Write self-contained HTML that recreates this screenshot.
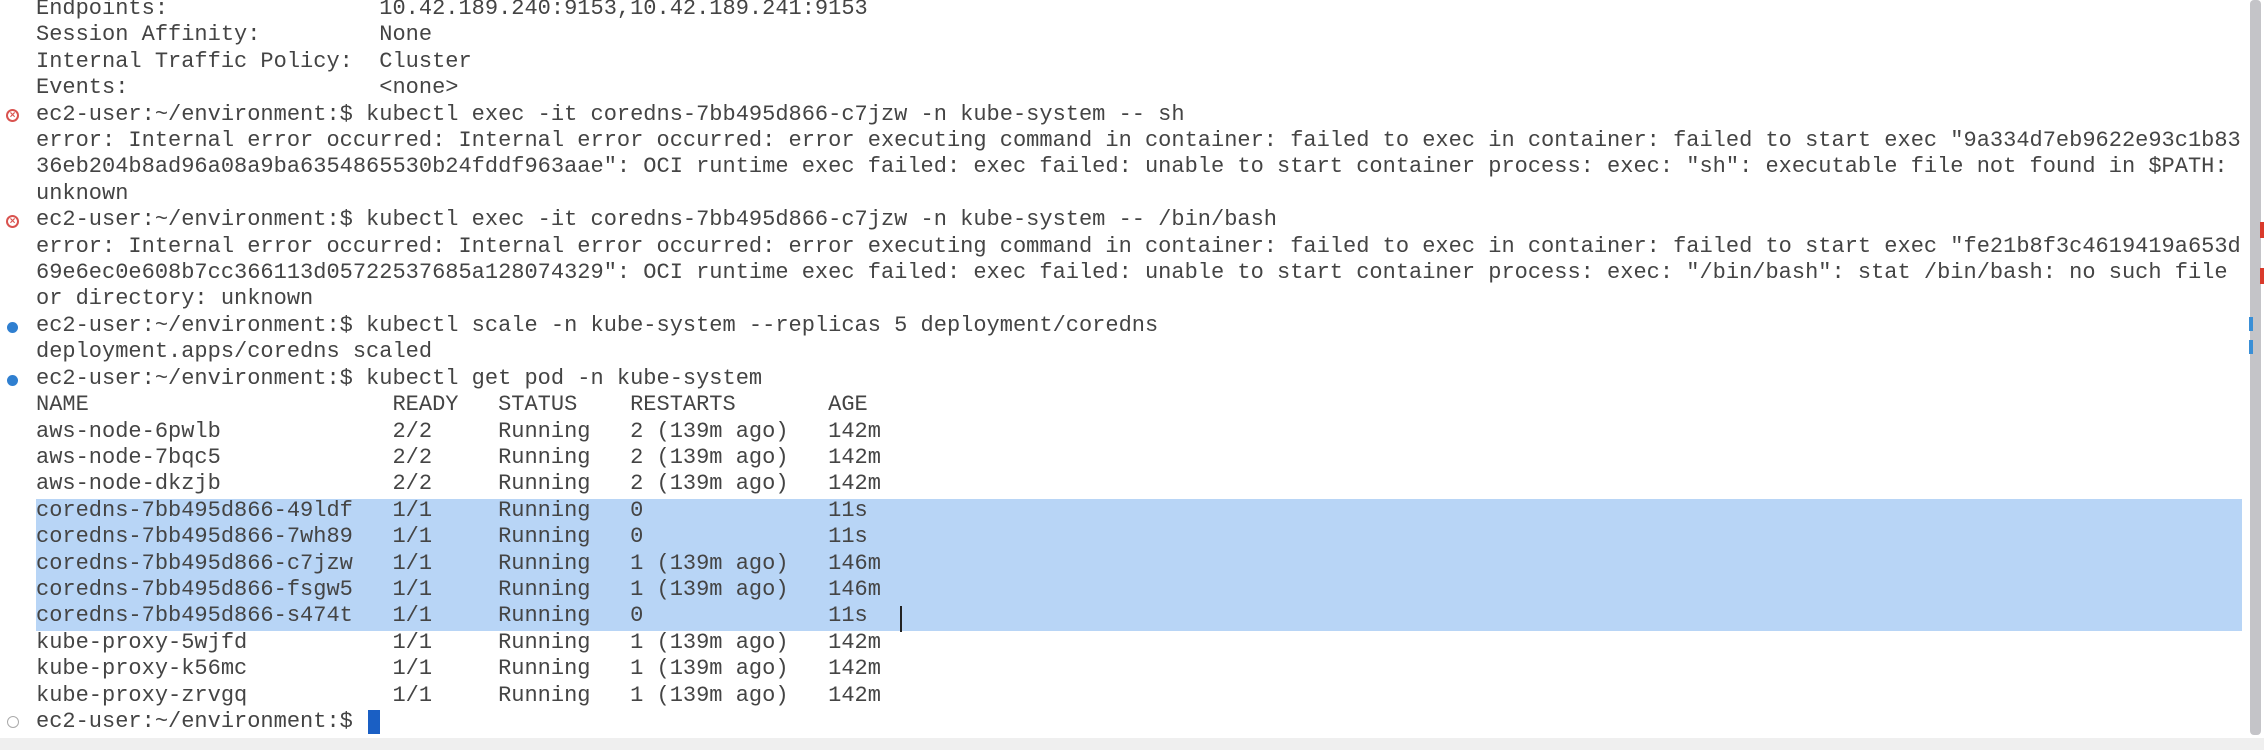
<!DOCTYPE html>
<html><head><style>
html,body{margin:0;padding:0;width:2264px;height:750px;overflow:hidden;background:#fff;}
.t{position:absolute;left:36px;top:-4px;font-family:"Liberation Mono","DejaVu Sans Mono",monospace;font-size:22px;line-height:26.4px;color:#444;white-space:pre;}
.sel{position:absolute;left:36px;top:499px;width:2206px;height:132px;background:#b8d5f6;}
.ic{position:absolute;left:6px;width:13px;height:13px;border-radius:50%;}
.sb{position:absolute;left:2250px;top:0;width:11px;height:735px;background:#c4c4c8;border-radius:4px;}
.bot{position:absolute;left:0;top:738px;width:2264px;height:12px;background:#efefef;}
</style></head><body>
<div class="sel"></div>
<div class="sb"></div>
<div style="position:absolute;left:2260px;top:222px;width:4px;height:16px;background:#d93a2b"></div>
<div style="position:absolute;left:2260px;top:268px;width:4px;height:16px;background:#d93a2b"></div>
<div style="position:absolute;left:2249px;top:317px;width:4px;height:14px;background:#3a8fd6"></div>
<div style="position:absolute;left:2249px;top:340px;width:4px;height:14px;background:#3a8fd6"></div>
<div class="bot"></div>
<div class="ic" style="top:109px;border:2px solid #d9534f;width:9px;height:9px;color:#d9534f;font:bold 10px/9px sans-serif;text-align:center">×</div>
<div class="ic" style="top:215px;border:2px solid #d9534f;width:9px;height:9px;color:#d9534f;font:bold 10px/9px sans-serif;text-align:center">×</div>
<div class="ic" style="top:322px;background:#2f7fd0;width:11px;height:11px;left:7px"></div>
<div class="ic" style="top:375px;background:#2f7fd0;width:11px;height:11px;left:7px"></div>
<div class="ic" style="top:716px;border:1px solid #aaa;width:10px;height:10px;left:7px"></div>
<div style="position:absolute;left:368px;top:710px;width:12px;height:24px;background:#1a5fc4"></div>
<div style="position:absolute;left:900px;top:606px;width:2px;height:26px;background:#222"></div>
<div class="t">Endpoints:                10.42.189.240:9153,10.42.189.241:9153
Session Affinity:         None
Internal Traffic Policy:  Cluster
Events:                   &lt;none&gt;
ec2-user:~/environment:$ kubectl exec -it coredns-7bb495d866-c7jzw -n kube-system -- sh
error: Internal error occurred: Internal error occurred: error executing command in container: failed to exec in container: failed to start exec "9a334d7eb9622e93c1b83
36eb204b8ad96a08a9ba6354865530b24fddf963aae": OCI runtime exec failed: exec failed: unable to start container process: exec: "sh": executable file not found in $PATH:
unknown
ec2-user:~/environment:$ kubectl exec -it coredns-7bb495d866-c7jzw -n kube-system -- /bin/bash
error: Internal error occurred: Internal error occurred: error executing command in container: failed to exec in container: failed to start exec "fe21b8f3c4619419a653d
69e6ec0e608b7cc366113d05722537685a128074329": OCI runtime exec failed: exec failed: unable to start container process: exec: "/bin/bash": stat /bin/bash: no such file
or directory: unknown
ec2-user:~/environment:$ kubectl scale -n kube-system --replicas 5 deployment/coredns
deployment.apps/coredns scaled
ec2-user:~/environment:$ kubectl get pod -n kube-system
NAME                       READY   STATUS    RESTARTS       AGE
aws-node-6pwlb             2/2     Running   2 (139m ago)   142m
aws-node-7bqc5             2/2     Running   2 (139m ago)   142m
aws-node-dkzjb             2/2     Running   2 (139m ago)   142m
coredns-7bb495d866-49ldf   1/1     Running   0              11s
coredns-7bb495d866-7wh89   1/1     Running   0              11s
coredns-7bb495d866-c7jzw   1/1     Running   1 (139m ago)   146m
coredns-7bb495d866-fsgw5   1/1     Running   1 (139m ago)   146m
coredns-7bb495d866-s474t   1/1     Running   0              11s
kube-proxy-5wjfd           1/1     Running   1 (139m ago)   142m
kube-proxy-k56mc           1/1     Running   1 (139m ago)   142m
kube-proxy-zrvgq           1/1     Running   1 (139m ago)   142m
ec2-user:~/environment:$ </div>
</body></html>
